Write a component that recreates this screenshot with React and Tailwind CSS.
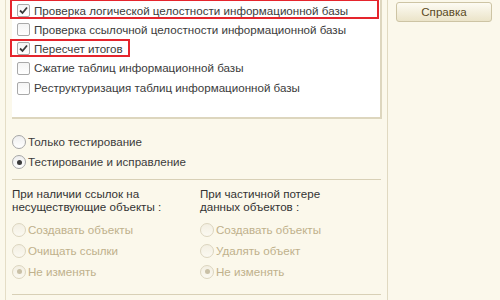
import React from 'react';

const font = { fontFamily: '"Liberation Sans", Arial, sans-serif' };

function CheckBox({ checked }) {
  return (
    <span className="w-[13px] h-[13px] shrink-0 rounded-[2px] border border-[#a9a9a9] bg-gradient-to-b from-[#f4f4f4] to-white flex items-center justify-center">
      {checked && (
        <svg width="11" height="11" viewBox="0 0 11 11">
          <path d="M2 5.5 L4.5 8 L9 2.5" fill="none" stroke="#3a3a3a" strokeWidth="1.8" />
        </svg>
      )}
    </span>
  );
}

function Radio({ checked, disabled }) {
  return (
    <span
      className={`w-[14px] h-[14px] shrink-0 rounded-full border flex items-center justify-center ${
        disabled
          ? 'border-[#dcd5bf] bg-gradient-to-b from-[#f3efe2] to-[#fbf9f1]'
          : 'border-[#a6a6a6] bg-gradient-to-b from-[#eeeeee] to-white'
      }`}
    >
      {checked && (
        <span className={`w-[5px] h-[5px] rounded-full ${disabled ? 'bg-[#c9c0a6]' : 'bg-[#3a3a3a]'}`} />
      )}
    </span>
  );
}

function ListRow({ checked, label, h, mark }) {
  return (
    <div className={`relative flex items-center gap-[4px] pl-[5px] whitespace-nowrap ${h}`}>
      <CheckBox checked={checked} />
      <span>{label}</span>
      {mark}
    </div>
  );
}

function RadioRow({ checked, label, disabled, h = 'h-[21px]' }) {
  return (
    <div className={`flex items-center gap-[2px] whitespace-nowrap ${h} ${disabled ? 'text-[#bfb18c]' : 'text-[#3b3b3b]'}`}>
      <Radio checked={checked} disabled={disabled} />
      <span>{label}</span>
    </div>
  );
}

export default function App() {
  return (
    <div className="w-[500px] h-[300px] overflow-hidden bg-[#fbf8eb] flex text-[11.6px] leading-[14px] text-[#3b3b3b]" style={font}>
      <div className="w-[387px] shrink-0 pl-[5px]">
        <div className="h-full border-l border-[#e4ddc6] pl-[6px]">
          <div className="w-[370px] h-[119px] bg-white border-r-2 border-b-2 border-[#ddd6be] pt-[1px]">
            <ListRow
              checked
              label="Проверка логической целостности информационной базы"
              h="h-[19px]"
              mark={<span className="absolute left-[-2px] top-[-2px] w-[369px] h-[20px] border-2 border-[#e5252d]" />}
            />
            <ListRow label="Проверка ссылочной целостности информационной базы" h="h-[19px]" />
            <ListRow
              checked
              label="Пересчет итогов"
              h="h-[19px]"
              mark={<span className="absolute left-[-2px] top-[0px] w-[120px] h-[18px] border-2 border-[#e5252d]" />}
            />
            <ListRow label="Сжатие таблиц информационной базы" h="h-[20px]" />
            <ListRow label="Реструктуризация таблиц информационной базы" h="h-[20px]" />
          </div>

          <div className="pt-[12px] pb-[7px]">
            <RadioRow label="Только тестирование" />
            <RadioRow checked label="Тестирование и исправление" h="h-[20px]" />
          </div>

          <div className="w-[369px] border-t border-[#d8d0b6]" />

          <div className="grid grid-cols-[188px_1fr] pt-[7px] w-[369px]">
            <div>
              <div className="text-[#333] leading-[13px]">
                При наличии ссылок на
                <br />
                несуществующие объекты :
              </div>
              <div className="pt-[6px]">
                <RadioRow disabled label="Создавать объекты" />
                <RadioRow disabled label="Очищать ссылки" />
                <RadioRow disabled checked label="Не изменять" />
              </div>
            </div>
            <div>
              <div className="text-[#333] leading-[13px]">
                При частичной потере
                <br />
                данных объектов :
              </div>
              <div className="pt-[6px]">
                <RadioRow disabled label="Создавать объекты" />
                <RadioRow disabled label="Удалять объект" />
                <RadioRow disabled checked label="Не изменять" />
              </div>
            </div>
          </div>

          <div className="w-[369px] mt-[12px] border-t border-[#d8d0b6]" />
        </div>
      </div>

      <div className="flex-1 border-l border-[#e0d9c1] pl-[8px] pt-[2px]">
        <button className="w-[96px] h-[20px] rounded-[3px] border border-[#cdc4a4] bg-gradient-to-b from-[#fdfbf3] to-[#ebe4c9] text-[#5a4a24] text-[11.6px] leading-[14px]" style={font}>
          Справка
        </button>
      </div>
    </div>
  );
}
